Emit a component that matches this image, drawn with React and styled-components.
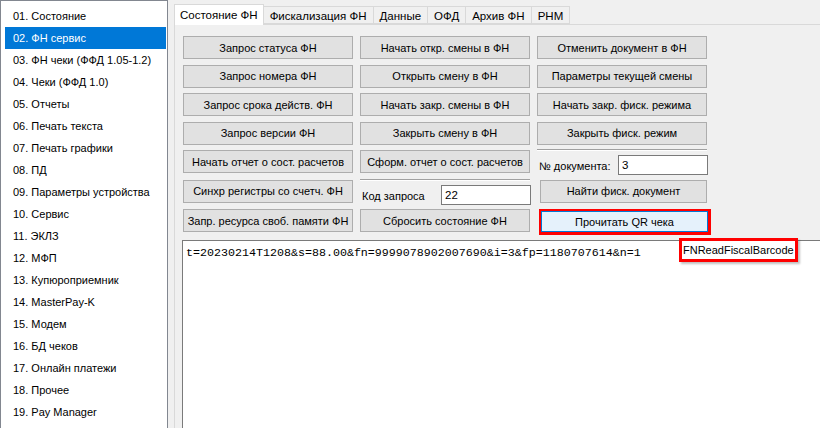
import React from "react";
import styled, { createGlobalStyle } from "styled-components";

const GlobalStyle = createGlobalStyle`
  html, body {
    margin: 0;
    padding: 0;
    background: #f0f0f0;
    font-family: "Liberation Sans", Arial, sans-serif;
  }
`;

const menuItems = [
  "01. Состояние",
  "02. ФН сервис",
  "03. ФН чеки (ФФД 1.05-1.2)",
  "04. Чеки (ФФД 1.0)",
  "05. Отчеты",
  "06. Печать текста",
  "07. Печать графики",
  "08. ПД",
  "09. Параметры устройства",
  "10. Сервис",
  "11. ЭКЛЗ",
  "12. МФП",
  "13. Купюроприемник",
  "14. MasterPay-K",
  "15. Модем",
  "16. БД чеков",
  "17. Онлайн платежи",
  "18. Прочее",
  "19. Pay Manager",
];

const tabs = ["Состояние ФН", "Фискализация ФН", "Данные", "ОФД", "Архив ФН", "РНМ"];

const QR_TEXT = "t=20230214T1208&s=88.00&fn=9999078902007690&i=3&fp=1180707614&n=1";

export default function App() {
  return (
    <Window>
      <GlobalStyle />
      <ListBox>
        {menuItems.map((item, i) => (
          <ListItem key={item} selected={i === 1}>
            {item}
          </ListItem>
        ))}
      </ListBox>

      <TabControl>
        <TabStrip>
          {tabs.map((t, i) => (
            <Tab key={t} active={i === 0}>
              {t}
            </Tab>
          ))}
        </TabStrip>

        <Pane>
          <ButtonGrid>
            <Button>Запрос статуса ФН</Button>
            <Button>Начать откр. смены в ФН</Button>
            <Button>Отменить документ в ФН</Button>

            <Button>Запрос номера ФН</Button>
            <Button>Открыть смену в ФН</Button>
            <Button>Параметры текущей смены</Button>

            <Button>Запрос срока действ. ФН</Button>
            <Button>Начать закр. смены в ФН</Button>
            <Button>Начать закр. фиск. режима</Button>

            <Button>Запрос версии ФН</Button>
            <Button>Закрыть смену в ФН</Button>
            <Button>Закрыть фиск. режим</Button>

            <Button>Начать отчет о сост. расчетов</Button>
            <Button>Сформ. отчет о сост. расчетов</Button>
            <Field>
              <Label>№ документа:</Label>
              <Input defaultValue="3" />
            </Field>

            <Button>Синхр регистры со счетч. ФН</Button>
            <Field>
              <Label>Код запроса</Label>
              <Input defaultValue="22" />
            </Field>
            <Button shifted>Найти фиск. документ</Button>

            <Button>Запр. ресурса своб. памяти ФН</Button>
            <Button>Сбросить состояние ФН</Button>
            <Marked>
              <Button focused>Прочитать QR чека</Button>
              <Tooltip>FNReadFiscalBarcode</Tooltip>
            </Marked>
          </ButtonGrid>

          <Output>{QR_TEXT}</Output>
        </Pane>
      </TabControl>
    </Window>
  );
}

const Window = styled.div`
  display: flex;
  width: 820px;
  height: 428px;
  overflow: hidden;
  background: #f0f0f0;
`;

const ListBox = styled.div`
  flex: 0 0 168px;
  box-sizing: border-box;
  height: 440px;
  background: #fff;
  border: 1px solid #828790;
  padding: 4px 1px 0 4px;
`;

const ListItem = styled.div`
  height: 22px;
  line-height: 22px;
  padding-left: 8px;
  font-size: 11px;
  color: ${(p) => (p.selected ? "#fff" : "#000")};
  background: ${(p) => (p.selected ? "#0078d7" : "transparent")};
  white-space: nowrap;
`;

const TabControl = styled.div`
  flex: 1;
  display: flex;
  flex-direction: column;
  padding: 4px 0 0 6px;
`;

const TabStrip = styled.div`
  display: flex;
  align-items: flex-end;
  height: 20px;
  position: relative;
  z-index: 1;
`;

const Tab = styled.div`
  box-sizing: border-box;
  height: ${(p) => (p.active ? "21px" : "18px")};
  margin-bottom: ${(p) => (p.active ? "-1px" : "0")};
  padding: ${(p) => (p.active ? "2px 5px 0" : "1px 6px 0")};
  margin-left: ${(p) => (p.active ? "0" : "-1px")};
  border: 1px solid #d9d9d9;
  border-bottom: ${(p) => (p.active ? "none" : "1px solid #d9d9d9")};
  background: ${(p) => (p.active ? "#fff" : "#f0f0f0")};
  font-size: 11.5px;
  line-height: 16px;
  color: #000;
  white-space: nowrap;
  &:first-child {
    margin-left: 0;
  }
`;

const Pane = styled.div`
  flex: 1;
  display: flex;
  flex-direction: column;
  border: 1px solid #d9d9d9;
  border-right: none;
  border-bottom: none;
  background: #f0f0f0;
  padding: 11px 0 0 8px;
`;

const ButtonGrid = styled.div`
  display: grid;
  grid-template-columns: repeat(3, 170px);
  grid-template-rows: 23px 23px 23px 23px 24px 24px 24px;
  column-gap: 7px;
  row-gap: 5.5px;
`;

const Button = styled.div`
  box-sizing: border-box;
  display: flex;
  align-items: center;
  justify-content: center;
  height: 23px;
  margin-left: ${(p) => (p.shifted ? "3px" : "0")};
  border: 1px solid ${(p) => (p.focused ? "#0078d7" : "#adadad")};
  background: ${(p) => (p.focused ? "#e5f1fb" : "#e1e1e1")};
  font-size: 11px;
  color: #000;
  white-space: nowrap;
`;

const Field = styled.div`
  display: grid;
  grid-template-columns: 81px 90px;
  align-items: end;
  margin-top: -1px;
  border-top: 1px solid #a0a0a0;
  box-shadow: inset 0 1px 0 #fff;
  height: 25px;
`;

const Label = styled.span`
  font-size: 11px;
  color: #000;
  padding: 0 0 3px 2px;
  white-space: nowrap;
`;

const Input = styled.input`
  box-sizing: border-box;
  width: 90px;
  height: 20px;
  margin: 0;
  padding: 0 3px;
  border: 1px solid #7a7a7a;
  background: #fff;
  font-family: "Liberation Sans", Arial, sans-serif;
  font-size: 11.5px;
  color: #000;
  outline: none;
`;

const Marked = styled.div`
  position: relative;
  margin: 0 -4px 0 2px;
  height: 26px;
  box-sizing: border-box;
  border: 2px solid #ff0000;
  border-width: 2px 3px 3px 2px;
  background: #ff0000;
  ${Button} {
    height: 21px;
  }
`;

const Tooltip = styled.div`
  position: absolute;
  top: 27px;
  left: 138px;
  z-index: 2;
  box-sizing: border-box;
  height: 24px;
  padding: 0 1px;
  border: 3px solid #ff0000;
  background: #fff;
  box-shadow: 2px 2px 2px rgba(0, 0, 0, 0.25);
  font-size: 11px;
  line-height: 18px;
  color: #000;
  white-space: nowrap;
`;

const Output = styled.div`
  flex: 1;
  margin: 7px 0 0 -1px;
  border: 1px solid #7a7a7a;
  border-right: none;
  border-bottom: none;
  background: #fff;
  padding: 5px 3px;
  font-family: "Liberation Mono", "Courier New", monospace;
  font-size: 11.67px;
  line-height: 14px;
  color: #000;
  white-space: nowrap;
`;
